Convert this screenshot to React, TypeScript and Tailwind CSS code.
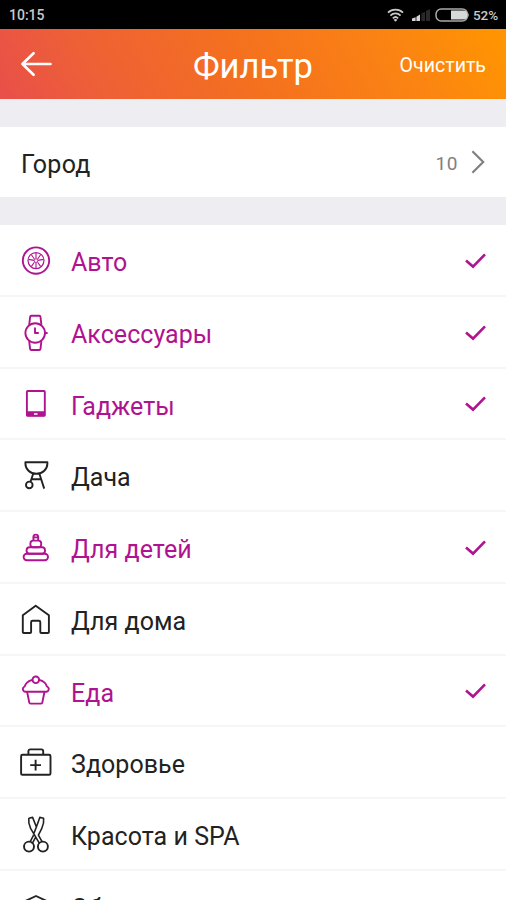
import type { ReactNode } from "react";
import clsx from "clsx";

type Category = {
  id: string;
  name: string;
  selected: boolean;
  icon: ReactNode;
};

const categories: Category[] = [
  {
    id: "auto",
    name: "Авто",
    selected: true,
    icon: (
      <>
        <circle cx="18" cy="19.6" r="13.2" />
        <circle cx="18" cy="19.6" r="8" strokeWidth="1.2" />
        <circle cx="18" cy="19.6" r="1.8" strokeWidth="0.9" />
        <path
          d="M18 12v5.6M18 21.6v5.6M13.4 13.8l3 4.2M22.6 13.8l-3 4.2M13.4 25.4l3-4.2M22.6 25.4l-3-4.2M10.6 18.4l5.4 1M25.4 18.4l-5.4 1"
          strokeWidth="1.1"
        />
      </>
    ),
  },
  {
    id: "accessories",
    name: "Аксессуары",
    selected: true,
    icon: (
      <>
        <circle cx="17.2" cy="20" r="9.8" />
        <path d="M11.2 11.8l.9-7.8a1.4 1.4 0 0 1 1.3-1.2h7.8a1.4 1.4 0 0 1 1.3 1.2l.9 7.8M11.2 28.2l.9 7.6a1.4 1.4 0 0 0 1.3 1.2h7.8a1.4 1.4 0 0 0 1.3-1.2l.9-7.6" />
        <path d="M17 14.6v5.4h3.8M27.4 20h2.2" />
      </>
    ),
  },
  {
    id: "gadgets",
    name: "Гаджеты",
    selected: true,
    icon: (
      <>
        <rect x="8.9" y="7" width="17.9" height="24.9" rx="0.8" />
        <path
          fill="currentColor"
          stroke="none"
          fillRule="evenodd"
          d="M8.5 27.2h18.7v5H8.5zM16 29.2v1.6h3.6v-1.6z"
        />
      </>
    ),
  },
  {
    id: "dacha",
    name: "Дача",
    selected: false,
    icon: (
      <>
        <path d="M7.4 6.2h22v1.2c0 5.6-4.7 10.4-11 10.4s-11-4.8-11-10.4z" />
        <path d="M15.2 17.8l-2.8 8.2M21.4 17.8l4.8 14.8M13.6 23.2h9.6" />
        <circle cx="11.3" cy="28.9" r="3.3" />
      </>
    ),
  },
  {
    id: "kids",
    name: "Для детей",
    selected: true,
    icon: (
      <>
        <rect x="5.6" y="25.8" width="24.4" height="6.4" rx="3.2" />
        <rect x="8.6" y="19.2" width="18.4" height="6.6" rx="3" />
        <rect x="12.4" y="12.6" width="10.8" height="6.6" rx="2.8" />
        <path d="M15.4 12.4V9a2.4 2.4 0 0 1 4.8 0v3.4M15.4 9.4h4.8" />
      </>
    ),
  },
  {
    id: "home",
    name: "Для дома",
    selected: false,
    icon: (
      <path d="M17.7 5.8L30.9 15.2v16.8a1 1 0 0 1-1 1h-6.6a1 1 0 0 1-1-1V22.2a1.4 1.4 0 0 0-1.4-1.4h-6.4a1.4 1.4 0 0 0-1.4 1.4V32a1 1 0 0 1-1 1H5.8a1 1 0 0 1-1-1V15.2z" />
    ),
  },
  {
    id: "food",
    name: "Еда",
    selected: true,
    icon: (
      <>
        <circle cx="17.8" cy="8.8" r="3.3" />
        <path d="M14.4 8.8C10.4 9.8 7.6 12 6.8 15.2 5.4 16 4.7 17 4.8 18c.2 1.6 1.2 2.8 2.8 2.8H28c1.6 0 2.6-1.2 2.8-2.8.1-1-.6-2-2-2.8-.8-3.2-3.6-5.4-7.6-6.4" />
        <path d="M9.1 20.8l2.2 10.8a1.2 1.2 0 0 0 1.2 1h10.6a1.2 1.2 0 0 0 1.2-1l2.2-10.8" />
      </>
    ),
  },
  {
    id: "health",
    name: "Здоровье",
    selected: false,
    icon: (
      <>
        <rect x="3.1" y="11.8" width="29.4" height="20" rx="1.4" />
        <path d="M10.4 11.6V8.2a1.8 1.8 0 0 1 1.8-1.8h11.2a1.8 1.8 0 0 1 1.8 1.8v3.4M17.6 16.8v10.6M12.2 22.1H23" />
      </>
    ),
  },
  {
    id: "beauty",
    name: "Красота и SPA",
    selected: false,
    icon: (
      <>
        <circle cx="11" cy="31.6" r="5" />
        <circle cx="24.9" cy="31.6" r="5" />
        <path
          d="M10.8 3.2l3.8-.8 3.8 9.6 3.4-9.6 3.8.8c.5 3.6-.2 7-1.8 10.2l-3.4 6.8 3.8 6.6M10.8 3.2c-.5 3.6.2 7 1.8 10.2l9 15.2M15.6 20.2l-3.4 6.4M18.4 12l-3 7.6M14 28.8l4-7.2"
          strokeWidth="1.6"
        />
      </>
    ),
  },
  {
    id: "education",
    name: "Обучение",
    selected: false,
    icon: <path d="M6 14.6L18 9l12 5.6v14L18 34.2 6 28.6z" />,
  },
];

function StatusBar() {
  return (
    <div className="flex h-[28.5px] shrink-0 items-center bg-black pt-[2px] pr-[8px] pl-[9px] text-[#c9c9c9]">
      <span className="text-[14px] font-medium">10:15</span>
      <svg className="ml-auto" width="19" height="14" viewBox="0 0 20 16" fill="none" stroke="currentColor" strokeWidth="2">
        <path d="M1.4 5.2c4.8-4.6 12.4-4.6 17.2 0M4.2 8.6c3.2-3.2 8.4-3.2 11.6 0M7 11.8c1.7-1.7 4.3-1.7 6 0" />
        <path d="M10 15.8l-2.2-2.4c1.3-1 3.1-1 4.4 0z" fill="currentColor" stroke="none" />
      </svg>
      <svg className="ml-[7px]" width="19" height="14" viewBox="0 0 19 14">
        <path d="M0 13v-2.4l3.6-1.4V13zM4.4 13V8.8L8 6.6V13z" fill="#d5d5d5" />
        <path d="M9.4 13V5.6L13 3.8V13zM14 13V3l4-2v12z" fill="#292929" />
      </svg>
      <svg className="ml-[4px]" width="35" height="14" viewBox="0 0 35 14">
        <rect x="1" y="1" width="31.5" height="12" rx="5.2" fill="none" stroke="#aaa" strokeWidth="1.5" />
        <path d="M16 2.4h12.4a3.8 3.8 0 0 1 3.8 3.8v1.6a3.8 3.8 0 0 1-3.8 3.8H16z" fill="#d8d8d8" />
        <path d="M33 4.4q1.6 2.6 0 5.2z" fill="#bbb" />
      </svg>
      <span className="ml-[3px] text-[13.5px] font-medium tracking-[-0.1px]">52%</span>
    </div>
  );
}

function Header() {
  return (
    <header className="grid h-[70.5px] shrink-0 grid-cols-[1fr_auto_1fr] items-center bg-linear-[60deg,#e84f4a_0%,#ee6036_20%,#f4701f_48%,#fb8412_78%,#ff9600_100%] px-[20px] text-white">
      <button type="button" aria-label="Назад">
        <svg width="32" height="26" viewBox="0 0 32 26" fill="none" stroke="currentColor" strokeWidth="2.6" strokeLinecap="round" strokeLinejoin="round">
          <path d="M30.5 13H2.4M13.6 2.2L2.4 13l11.2 10.8" />
        </svg>
      </button>
      <h1 className="pt-[5px] text-[34.5px] leading-none">Фильтр</h1>
      <button type="button" className="justify-self-end pt-[4px] text-[19.6px]">
        Очистить
      </button>
    </header>
  );
}

function CityRow() {
  return (
    <div className="flex h-[70px] shrink-0 items-center bg-white pr-[21px] pl-[21px]">
      <span className="pt-[5px] text-[25px] tracking-[0.25px] text-[#222]">Город</span>
      <span className="ml-auto pt-[4px] text-[19px] tracking-[0.6px] text-[#808080]">10</span>
      <svg className="ml-[13px]" width="14" height="24" viewBox="0 0 14 24" fill="none" stroke="#808080" strokeWidth="2.2">
        <path d="M1.4 1.2L12.2 12 1.4 22.8" />
      </svg>
    </div>
  );
}

function CategoryRow({ category }: { category: Category }) {
  return (
    <li
      className={clsx(
        "flex h-[71.75px] items-center border-b-2 border-[#f6f6f7] pt-[2px] pr-[20px] pl-[18px]",
        category.selected ? "text-[#b0138f]" : "text-[#222]"
      )}
    >
      <svg width="36" height="40" viewBox="0 0 36 40" fill="none" stroke="currentColor" strokeWidth="1.9" strokeLinejoin="round">
        {category.icon}
      </svg>
      <span className="ml-[17px] pt-[4px] text-[25px] tracking-[0.04px]">{category.name}</span>
      {category.selected && (
        <svg className="ml-auto" width="21" height="16" viewBox="0 0 21 16" fill="none" stroke="currentColor" strokeWidth="2.6">
          <path d="M1 7.6l7 6L20 1.4" />
        </svg>
      )}
    </li>
  );
}

export default function App() {
  return (
    <div className="flex h-[900px] w-[506px] flex-col overflow-hidden bg-[#eeedf2] font-[Roboto,sans-serif]">
      <StatusBar />
      <Header />
      <div className="mt-[28px] mb-[28px]">
        <CityRow />
      </div>
      <ul className="bg-white">
        {categories.map((category) => (
          <CategoryRow key={category.id} category={category} />
        ))}
      </ul>
    </div>
  );
}
